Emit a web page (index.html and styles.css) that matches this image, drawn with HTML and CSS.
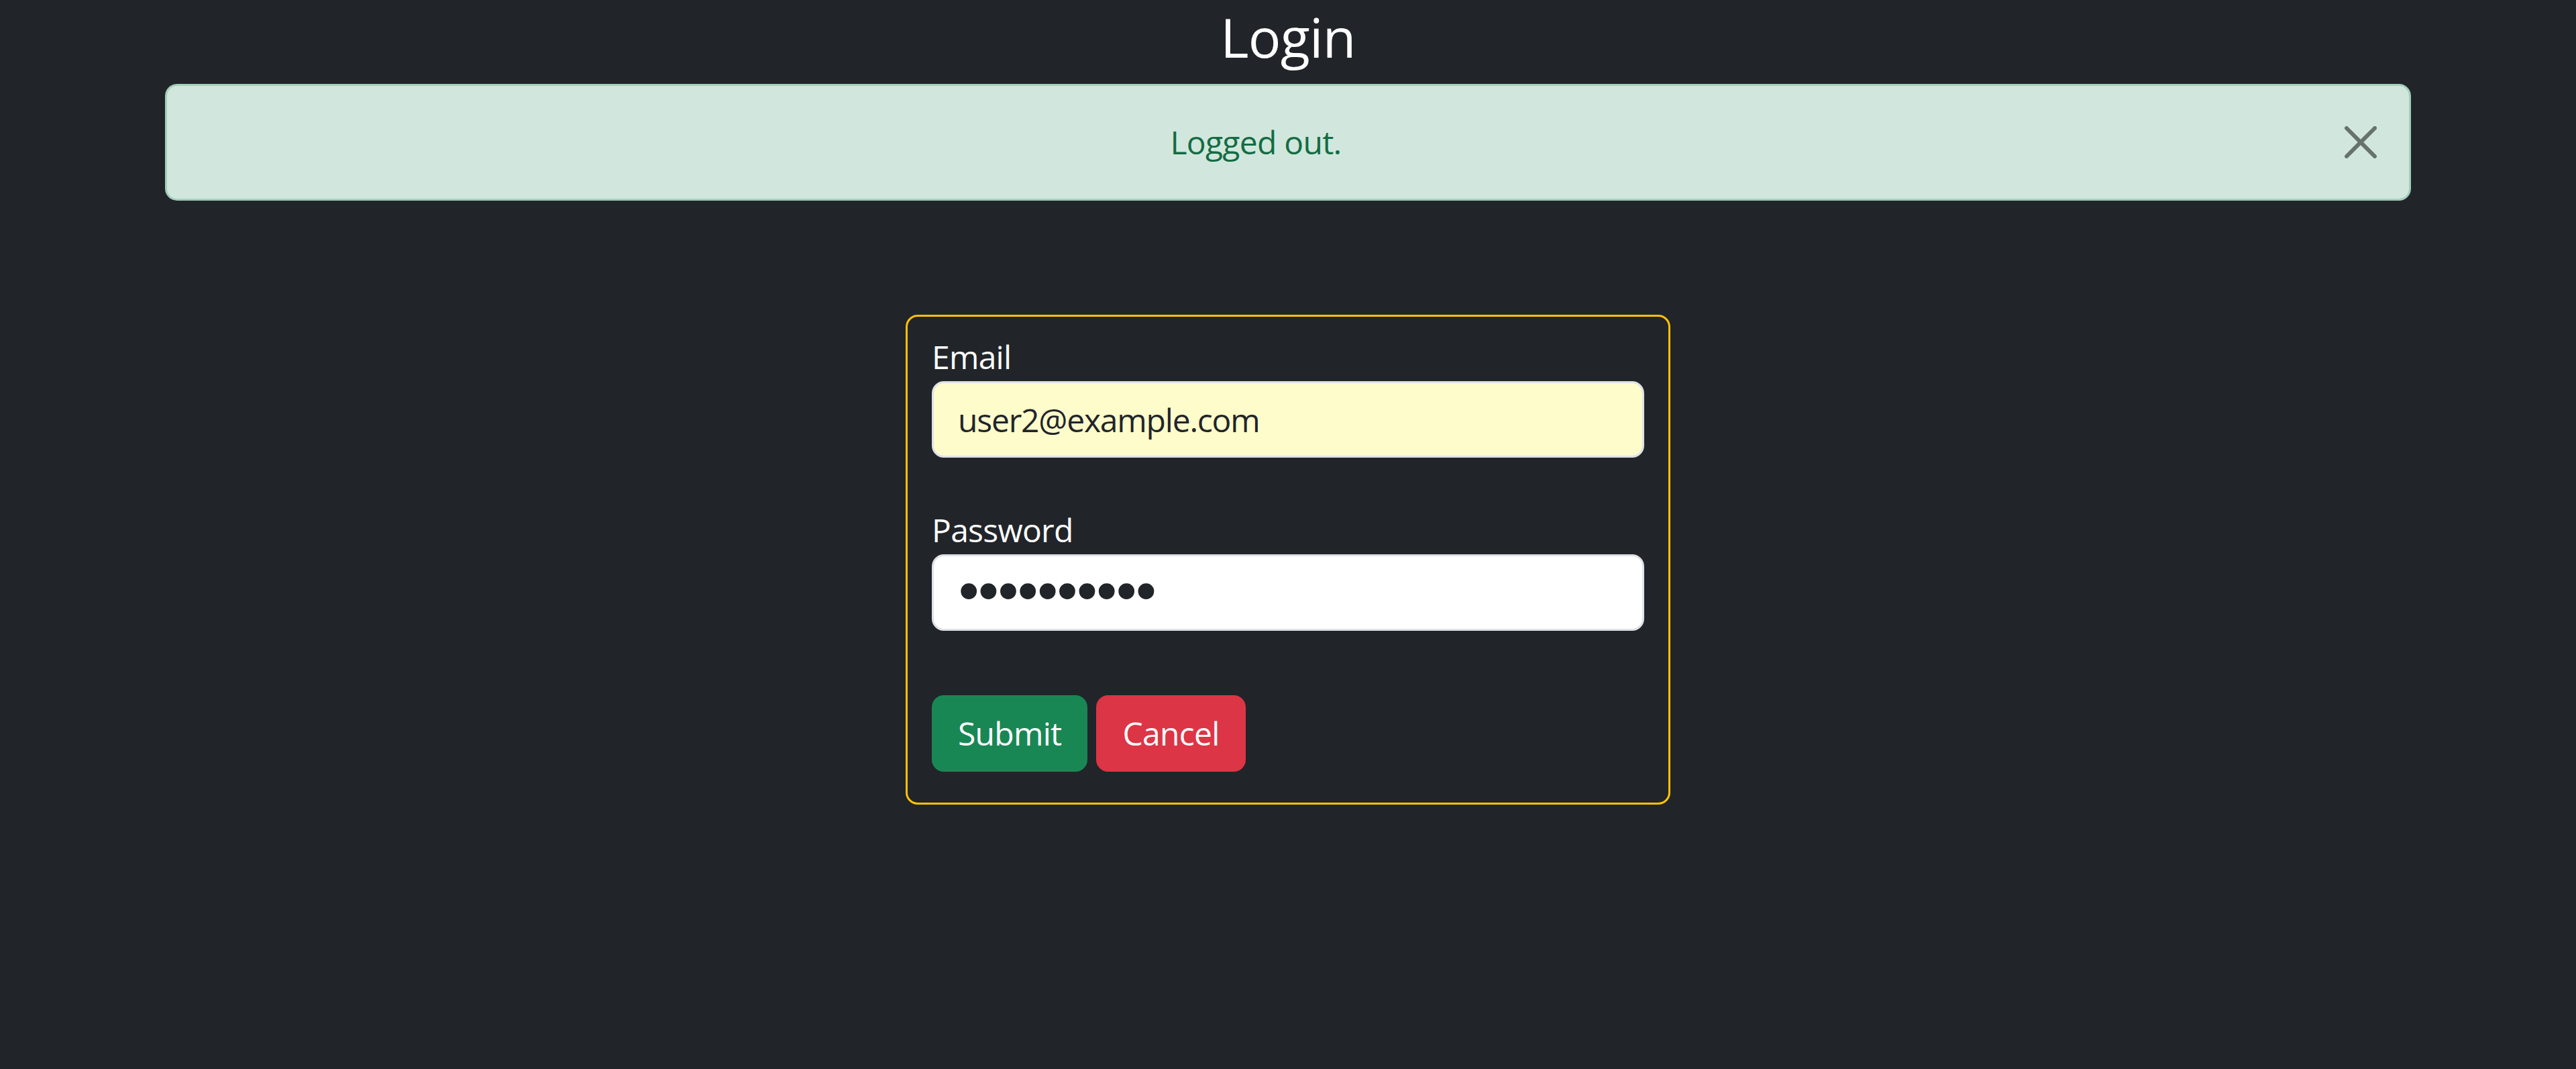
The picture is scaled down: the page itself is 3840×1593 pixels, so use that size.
FILE: index.html
```html
<!DOCTYPE html>
<html lang="en">
<head>
<meta charset="utf-8">
<title>Login</title>
<link rel="stylesheet" href="styles.css">
</head>
<body>
<main class="container">
  <h3 class="page-title">Login</h3>
  <div class="alert" role="alert">
    <div class="alert-message">Logged out.</div>
    <button class="btn-close" type="button" aria-label="Close">
      <svg viewBox="0 0 16 16" width="48" height="48" aria-hidden="true"><path d="M.293.293a1 1 0 0 1 1.414 0L8 6.586 14.293.293a1 1 0 1 1 1.414 1.414L9.414 8l6.293 6.293a1 1 0 0 1-1.414 1.414L8 9.414l-6.293 6.293a1 1 0 0 1-1.414-1.414L6.586 8 .293 1.707a1 1 0 0 1 0-1.414z"/></svg>
    </button>
  </div>
  <form class="login-card">
    <div class="field">
      <label class="field-label" for="email">Email</label>
      <input class="field-input autofilled" id="email" type="email" value="user2@example.com">
    </div>
    <div class="field">
      <label class="field-label" for="password">Password</label>
      <input class="field-input password" id="password" type="password" value="abcdefghij">
    </div>
    <div class="actions">
      <button class="btn btn-success" type="submit">Submit</button>
      <button class="btn btn-danger" type="button">Cancel</button>
    </div>
  </form>
</main>
</body>
</html>
```
FILE: styles.css
```css
* { box-sizing: border-box; }

html, body {
  margin: 0;
  padding: 0;
  background: #212529;
  min-height: 100%;
}

body {
  font-family: "Open Sans", "Noto Sans", sans-serif;
  font-size: 48px;
  line-height: 1.5;
  color: #ffffff;
  letter-spacing: -0.015em;
}

.container {
  width: 3348px;
  margin: 0 auto;
}

.page-title {
  margin: 0 0 16px;
  font-size: 81px;
  line-height: 109px;
  font-weight: 400;
  text-align: center;
  color: #ffffff;
}

.alert {
  display: flex;
  align-items: center;
  padding: 48px 0 48px 48px;
  background: #d1e7dd;
  border: 3px solid #a3cfbb;
  border-radius: 18px;
  color: #146c43;
}

.alert-message {
  flex: 1;
  text-align: center;
  line-height: 72px;
}

.btn-close {
  width: 144px;
  height: 48px;
  padding: 0 48px;
  margin: 0;
  border: 0;
  background: transparent;
  display: flex;
  align-items: center;
  justify-content: center;
  opacity: 0.5;
  cursor: pointer;
}

.btn-close svg {
  display: block;
  fill: #000000;
}

.login-card {
  width: 1140px;
  margin: 170px auto 0;
  border: 3px solid #ffc107;
  border-radius: 18px;
  padding: 24px 36px 46px;
}

.field {
  display: flex;
  flex-direction: column;
  margin-bottom: 72px;
}

.field-label {
  line-height: 72px;
  color: #ffffff;
}

.field-input {
  display: block;
  width: 100%;
  height: 114px;
  padding: 18px 36px;
  border: 3px solid #dee2e6;
  border-radius: 18px;
  background: #ffffff;
  color: #212529;
  font-family: "Open Sans", "Noto Sans", sans-serif;
  font-size: 48px;
  line-height: 72px;
  letter-spacing: -0.025em;
  outline: none;
}

.field-input.autofilled {
  background: #fffccb;
}

.field-input.password {
  font-family: "DejaVu Sans", sans-serif;
  font-size: 82px;
  letter-spacing: -19px;
  padding-left: 28px;
}

.actions {
  display: flex;
  gap: 13px;
  padding-top: 24px;
}

.btn {
  padding: 18px 36px;
  border: 3px solid transparent;
  border-radius: 18px;
  font-family: "Open Sans", "Noto Sans", sans-serif;
  font-size: 48px;
  line-height: 72px;
  letter-spacing: -0.015em;
  color: #ffffff;
  cursor: pointer;
}

.btn-success {
  background: #198754;
  border-color: #198754;
}

.btn-danger {
  background: #dc3545;
  border-color: #dc3545;
}
```
